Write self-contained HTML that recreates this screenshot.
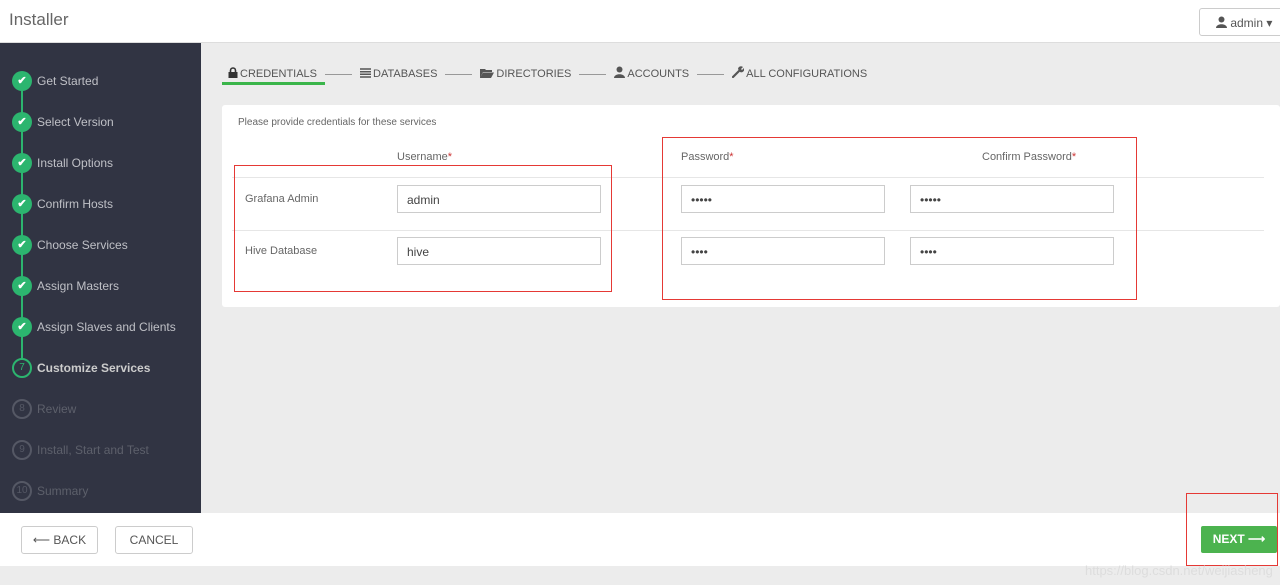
<!DOCTYPE html>
<html><head><style>
*{box-sizing:border-box;margin:0;padding:0}
body{width:1280px;height:585px;position:relative;font-family:"Liberation Sans",sans-serif;background:#ececec;overflow:hidden;color:#555}
.hdr{position:absolute;left:0;top:0;width:1280px;height:43px;background:#fff;border-bottom:1px solid #ddd}
.hdr .t{position:absolute;left:9px;top:10px;font-size:17px;color:#666}
.adm{position:absolute;left:1199px;top:8px;width:84px;height:28px;border:1px solid #ccc;border-radius:3px;font-size:12px;color:#555;padding:7px 0 0 16px;white-space:nowrap}
.side{position:absolute;left:0;top:43px;width:201px;height:470px;background:#313443}
.line{position:absolute;left:21px;top:38px;width:2px;height:287px;background:#2cb56f}
.st{position:absolute;left:12px;width:190px;height:20px;font-size:12px;color:#bfc0c6}
.st .c{position:absolute;left:0;top:0;width:20px;height:20px;border-radius:50%;background:#2cb56f;color:#fff;font-size:11px;text-align:center;line-height:20px;font-weight:bold}
.st .o{background:transparent;border:2px solid #555865;color:#555865;font-weight:normal;line-height:16px;font-size:10px}
.st .a{background:#313443;border:2px solid #2cb56f;color:#2cb56f;font-weight:normal;line-height:16px;font-size:10px}
.st span{position:absolute;left:25px;top:3px;white-space:nowrap}
.tabs{position:absolute;left:228px;top:66px;font-size:11px;color:#555;white-space:nowrap}
.tabs b{font-weight:normal;display:inline-block}
.tabs svg{vertical-align:-1px;margin-right:2px}
.dash{display:inline-block;width:27px;height:1px;background:#999;vertical-align:middle;margin:0 8px}
.ul{position:absolute;left:222px;top:82px;width:103px;height:3px;background:#3ab54a}
.card{position:absolute;left:222px;top:105px;width:1058px;height:202px;background:#fff;border-radius:3px}
.lbl{position:absolute;font-size:11px;color:#666}
.hl{position:absolute;height:1px;background:#e6e6e6;left:10px;width:1032px}
.in{position:absolute;width:204px;height:28px;border:1px solid #ccc;font-size:12px;color:#444;padding:7px 9px}
.req{color:#c33}
.red{position:absolute;border:1px solid #e53935}
.foot{position:absolute;left:0;top:513px;width:1280px;height:53px;background:#fff}
.btn{position:absolute;height:28px;border:1px solid #ccc;border-radius:3px;font-size:12px;color:#555;text-align:center;line-height:26px;background:#fff}
.next{position:absolute;left:1201px;top:526px;width:76px;height:27px;background:#4cb34f;color:#fff;font-size:12px;font-weight:bold;text-align:center;line-height:27px;border-radius:2px}
.wm{position:absolute;left:1085px;top:563px;font-size:13px;color:#ddd}
</style></head><body>
<div class="hdr"><div class="t">Installer</div><div class="adm"><svg width="11" height="12" viewBox="0 0 11 12" style="vertical-align:-1px"><circle cx="5.5" cy="3.5" r="3" fill="#555"/><path d="M0 12 C0 7 11 7 11 12Z" fill="#555"/></svg> admin ▾</div></div>
<div class="side">
<div class="line"></div>
<div class="st" style="top:28px"><div class="c">✔</div><span>Get Started</span></div>
<div class="st" style="top:69px"><div class="c">✔</div><span>Select Version</span></div>
<div class="st" style="top:110px"><div class="c">✔</div><span>Install Options</span></div>
<div class="st" style="top:151px"><div class="c">✔</div><span>Confirm Hosts</span></div>
<div class="st" style="top:192px"><div class="c">✔</div><span>Choose Services</span></div>
<div class="st" style="top:233px"><div class="c">✔</div><span>Assign Masters</span></div>
<div class="st" style="top:274px"><div class="c">✔</div><span>Assign Slaves and Clients</span></div>
<div class="st" style="top:315px"><div class="c a">7</div><span style="font-weight:bold;color:#ccc">Customize Services</span></div>
<div class="st" style="top:356px;color:#5d606b"><div class="c o">8</div><span>Review</span></div>
<div class="st" style="top:397px;color:#5d606b"><div class="c o">9</div><span>Install, Start and Test</span></div>
<div class="st" style="top:438px;color:#5d606b"><div class="c o">10</div><span>Summary</span></div>
</div>
<div class="tabs"><b><svg width="10" height="11" viewBox="0 0 10 11"><path d="M2.5 5V3.5a2.5 2.5 0 0 1 5 0V5" stroke="#333" stroke-width="1.6" fill="none"/><rect x="0.5" y="5" width="9" height="6" fill="#333"/></svg>CREDENTIALS</b><i class="dash"></i><b><svg width="11" height="10" viewBox="0 0 11 10"><path d="M0 1h11M0 3.7h11M0 6.3h11M0 9h11" stroke="#555" stroke-width="1.5"/></svg>DATABASES</b><i class="dash"></i><b><svg width="14" height="10" viewBox="0 0 14 10"><path d="M0 1h5l1 1h6v2H3L0 10Z M3 4.5h11L11 10H0Z" fill="#555"/></svg>DIRECTORIES</b><i class="dash"></i><b><svg width="11" height="12" viewBox="0 0 11 12"><circle cx="5.5" cy="3.5" r="3" fill="#555"/><path d="M0 12 C0 7 11 7 11 12Z" fill="#555"/></svg>ACCOUNTS</b><i class="dash"></i><b><svg width="12" height="12" viewBox="0 0 12 12"><path d="M1 11 L7 5" stroke="#555" stroke-width="2.2" stroke-linecap="round"/><path d="M6 3a3 3 0 0 1 5-2L9 3l1 1 2-2a3 3 0 0 1-4 4Z" fill="#555"/></svg>ALL CONFIGURATIONS</b></div>
<div class="ul"></div>
<div class="card">
<div class="lbl" style="left:16px;top:12px;font-size:10px">Please provide credentials for these services</div>
<div class="lbl" style="left:175px;top:46px">Username<span class="req">*</span></div>
<div class="lbl" style="left:459px;top:46px">Password<span class="req">*</span></div>
<div class="lbl" style="left:760px;top:46px">Confirm Password<span class="req">*</span></div>
<div class="hl" style="top:72px"></div>
<div class="hl" style="top:125px"></div>
<div class="lbl" style="left:23px;top:88px">Grafana Admin</div>
<div class="lbl" style="left:23px;top:140px">Hive Database</div>
<div class="in" style="left:175px;top:80px">admin</div>
<div class="in" style="left:459px;top:80px">•••••</div>
<div class="in" style="left:688px;top:80px">•••••</div>
<div class="in" style="left:175px;top:132px">hive</div>
<div class="in" style="left:459px;top:132px">••••</div>
<div class="in" style="left:688px;top:132px">••••</div>
</div>
<div class="red" style="left:234px;top:165px;width:378px;height:127px"></div>
<div class="red" style="left:662px;top:137px;width:475px;height:163px"></div>
<div class="foot"></div>
<div class="btn" style="left:21px;top:526px;width:77px">⟵ BACK</div>
<div class="btn" style="left:115px;top:526px;width:78px">CANCEL</div>
<div class="next">NEXT ⟶</div>
<div class="red" style="left:1186px;top:493px;width:92px;height:73px"></div>
<div class="wm">https://blog.csdn.net/weijiasheng</div>
</body></html>
